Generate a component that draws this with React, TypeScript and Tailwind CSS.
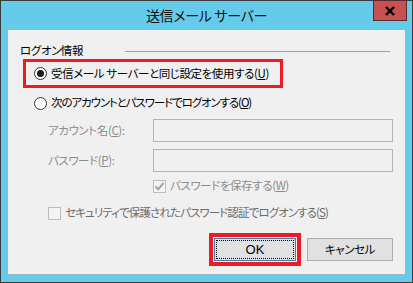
const jp = { fontFamily: '"Meiryo UI", "Noto Sans CJK JP", sans-serif' };

function Radio({ checked }: { checked?: boolean }) {
  return (
    <span className="w-[13px] h-[13px] rounded-full border border-[#333] bg-white flex items-center justify-center shrink-0">
      {checked && <span className="w-[7px] h-[7px] rounded-full bg-[#1a1a1a]" />}
    </span>
  );
}

function Check({ checked }: { checked?: boolean }) {
  return (
    <span className="w-[13px] h-[13px] border border-[#bcbcbc] bg-[#f4f4f4] flex items-center justify-center shrink-0">
      {checked && (
        <svg width="11" height="11" viewBox="0 0 11 11">
          <path d="M1.5 5.5 L4.2 8.3 L9.5 2" fill="none" stroke="#a3a3a3" strokeWidth="2" />
        </svg>
      )}
    </span>
  );
}

export default function App() {
  return (
    <div className="w-[413px] h-[283px] bg-[#65cbea] border border-[#3c3c3c] flex flex-col text-[11.5px] tracking-[-0.4px] text-black whitespace-nowrap [font-feature-settings:'palt']" style={jp}>
      <div className="h-[29px] relative flex items-center justify-center shrink-0">
        <span className="text-[14px] tracking-[-0.3px] text-[#111] -mt-[1px]">送信メール サーバー</span>
        <div className="absolute right-[5px] top-[-1px] w-[34px] h-[21px] bg-[#c75050] border border-[#5a2a2a] flex items-center justify-center">
          <svg width="12" height="10" viewBox="0 0 12 10">
            <path d="M2 1 L10 9 M10 1 L2 9" stroke="#000" strokeWidth="2.4" />
          </svg>
        </div>
      </div>

      <div className="mx-[7px] mb-[7px] flex-1 bg-[#f0f0f0] border-b border-[#9fb8c4]">
        <div className="mt-[13px] h-[16px] flex items-center pl-[12px] pr-[15px]">
          <span className="leading-none w-[105px]">ログオン情報</span>
          <div className="flex-1 h-px bg-[#a0a0a0]" />
        </div>

        <div className="ml-[15px] w-[260px] h-[29px] border-[3px] border-[#ed1c24] flex items-center pl-[8px]">
          <Radio checked />
          <span className="ml-[4px] leading-none">
            受信メール サーバーと同じ設定を使用する(<u>U</u>)
          </span>
        </div>

        <div className="mt-[5px] h-[20px] flex items-center pl-[26px]">
          <Radio />
          <span className="ml-[4px] leading-none tracking-[-1.1px]">
            次のアカウントとパスワードでログオンする(<u>O</u>)
          </span>
        </div>

        <div className="mt-[6px] h-[23px] flex items-center">
          <span className="w-[145px] pl-[40px] text-[#8c8c8c] leading-none">
            アカウント名(<u>C</u>):
          </span>
          <div className="w-[240px] h-[23px] border border-[#b4b4b4] bg-[#f0f0f0]" />
        </div>

        <div className="mt-[7px] h-[23px] flex items-center">
          <span className="w-[145px] pl-[40px] text-[#8c8c8c] leading-none">
            パスワード(<u>P</u>):
          </span>
          <div className="w-[240px] h-[23px] border border-[#b4b4b4] bg-[#f0f0f0]" />
        </div>

        <div className="mt-[6px] h-[16px] flex items-center pl-[145px]">
          <Check checked />
          <span className="ml-[4px] text-[#8c8c8c] leading-none">
            パスワードを保存する(<u>W</u>)
          </span>
        </div>

        <div className="mt-[11px] h-[16px] flex items-center pl-[40px]">
          <Check />
          <span className="ml-[4px] text-[#6d6d6d] leading-none tracking-[-0.9px]">
            セキュリティで保護されたパスワード認証でログオンする(<u>S</u>)
          </span>
        </div>

        <div className="mt-[12px] flex items-center pl-[201px]">
          <div className="w-[92px] h-[33px] border-[4px] border-[#ed1c24] bg-[#f0f0f0] flex">
            <div className="flex-1 m-px border border-[#3c7fb1] bg-[#e1e1e1] flex p-px">
              <div className="flex-1 border border-dotted border-black flex items-center justify-center">
                <span className="text-[13px] leading-none tracking-normal" style={{ fontFamily: '"Liberation Sans", "Noto Sans CJK JP", sans-serif' }}>OK</span>
              </div>
            </div>
          </div>
          <div className="ml-[6px] w-[86px] h-[23px] border border-[#adadad] bg-[#e1e1e1] flex items-center justify-center">
            <span className="leading-none">キャンセル</span>
          </div>
        </div>
      </div>
    </div>
  );
}
